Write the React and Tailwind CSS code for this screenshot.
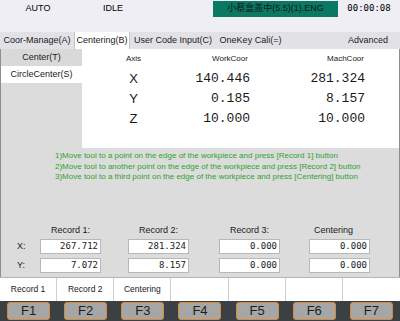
import React from 'react'

const tabs = [
  { label: 'Coor-Manage(A)', w: 'w-[74px]' },
  { label: 'Centering(B)', w: 'w-[56px]', active: true },
  { label: 'User Code Input(C)', w: 'w-[86px]' },
  { label: 'OneKey Cali(=)', w: 'w-[69px]' },
]

const axes = [
  { axis: 'X', work: '140.446', mach: '281.324' },
  { axis: 'Y', work: '0.185', mach: '8.157' },
  { axis: 'Z', work: '10.000', mach: '10.000' },
]

const records = [
  { x: '267.712', y: '7.072' },
  { x: '281.324', y: '8.157' },
  { x: '0.000', y: '0.000' },
  { x: '0.000', y: '0.000' },
]

const gaps = ['ml-0', 'ml-[27px]', 'ml-[30px]', 'ml-[29px]']

function ValueBox({ value, className }) {
  return (
    <div
      className={`w-[61px] h-[15px] bg-white border border-[#b8b8b8] flex items-center justify-end pr-[2px] font-['DejaVu_Sans_Mono',monospace] text-[9px] text-[#1a1a1a] ${className}`}
    >
      {value}
    </div>
  )
}

export default function App() {
  return (
    <div className="w-[400px] h-[321px] overflow-hidden flex flex-col font-['Liberation_Sans',sans-serif] text-[#1a1a1a] bg-[#dcdcdc]">
      {/* status bar */}
      <div className="h-[32px] bg-[#efeef5] flex items-start pt-[1px]">
        <div className="w-[76px] h-[16px] flex items-center justify-center text-[9px] text-black">AUTO</div>
        <div className="w-[74px] h-[16px] flex items-center justify-center text-[9px] text-black">IDLE</div>
        <div className="ml-[63px] w-[125px] h-[16px] bg-[#0a7862] flex items-center justify-center text-[9px] text-[#101a18] font-['Liberation_Sans','Noto_Sans_CJK_SC',sans-serif]">
          小蔡盒盖中(5.5)(1).ENG
        </div>
        <div className="flex-1 h-[16px] flex items-center justify-center font-['DejaVu_Sans_Mono',monospace] text-[9px] text-black">
          00:00:08
        </div>
      </div>

      {/* tabs */}
      <div className="h-[17px] bg-[#e2e2e6] flex items-stretch text-[9px]">
        {tabs.map((t) => (
          <div
            key={t.label}
            className={`${t.w} flex items-center justify-center whitespace-nowrap ${
              t.active ? 'bg-white border-x border-[#c4c4c8]' : ''
            }`}
          >
            {t.label}
          </div>
        ))}
        <div className="ml-auto w-[62px] mr-[1px] flex items-center justify-center">Advanced</div>
      </div>

      {/* content */}
      <div className="h-[228px] border-x border-[#8e8e8e] bg-[#dcdcdc] flex flex-col">
        <div className="h-[99px] flex">
          <div className="w-[81px] text-[9px]">
            <div className="h-[17px] flex items-center justify-center bg-[#d9d9d9]">Center(T)</div>
            <div className="h-[17px] flex items-center justify-center bg-white">CircleCenter(S)</div>
          </div>
          <div className="flex-1 bg-white">
            <div className="h-[20px] flex items-center text-[8px]">
              <div className="w-[103px] text-center">Axis</div>
              <div className="ml-[5px] w-[80px] text-center">WorkCoor</div>
              <div className="ml-[35px] w-[81px] text-center">MachCoor</div>
            </div>
            {axes.map((a) => (
              <div key={a.axis} className="h-[20px] flex items-center">
                <div className="w-[103px] text-center text-[13px]">{a.axis}</div>
                <div className="ml-[5px] w-[80px] pr-[20px] text-right font-['Liberation_Mono',monospace] text-[13px]">
                  {a.work}
                </div>
                <div className="ml-[35px] w-[81px] pr-[21px] text-right font-['Liberation_Mono',monospace] text-[13px]">
                  {a.mach}
                </div>
              </div>
            ))}
          </div>
        </div>

        <div className="pt-[3px] pl-[54px] text-[8px] leading-[10.5px] text-[#2fa32f] whitespace-nowrap">
          <div>1)Move tool to a point on the edge of the workpiece and press [Record 1] button</div>
          <div>2)Move tool to another point on the edge of the workpiece and press [Record 2] button</div>
          <div>3)Move tool to a third point on the edge of the workpiece and press [Centering] button</div>
        </div>

        <div className="mt-auto mb-[4px] text-[9px]">
          <div className="h-[12px] flex items-center">
            <div className="ml-[16px] w-[23px]" />
            {['Record 1:', 'Record 2:', 'Record 3:', 'Centering'].map((h, i) => (
              <div
                key={h}
                className={`w-[61px] text-center whitespace-nowrap ${gaps[i]} ${i === 3 ? 'pr-[12px]' : ''}`}
              >
                {h}
              </div>
            ))}
          </div>
          <div className="mt-[2px] flex items-center">
            <div className="ml-[16px] w-[23px]">X:</div>
            {records.map((r, i) => (
              <ValueBox key={i} value={r.x} className={gaps[i]} />
            ))}
          </div>
          <div className="mt-[4px] flex items-center">
            <div className="ml-[16px] w-[23px]">Y:</div>
            {records.map((r, i) => (
              <ValueBox key={i} value={r.y} className={gaps[i]} />
            ))}
          </div>
        </div>
      </div>

      {/* soft key labels */}
      <div className="h-[24px] bg-white border-t border-[#b4b4b4] grid grid-cols-7 text-[8.5px]">
        {['Record 1', 'Record 2', 'Centering', '', '', '', ''].map((l, i) => (
          <div
            key={i}
            className={`flex items-center justify-center ${i < 6 ? 'border-r border-[#d0d0d0]' : ''}`}
          >
            {l}
          </div>
        ))}
      </div>

      {/* function keys */}
      <div className="h-[20px] bg-[#3b4045] grid grid-cols-7 items-center justify-items-center">
        {['F1', 'F2', 'F3', 'F4', 'F5', 'F6', 'F7'].map((f) => (
          <div
            key={f}
            className="w-[43px] h-[18px] bg-[#a6a6a6] border border-[#dd8a2e] rounded-[3px] flex items-center justify-center text-[13px] text-[#1e1e1e]"
          >
            {f}
          </div>
        ))}
      </div>
    </div>
  )
}
